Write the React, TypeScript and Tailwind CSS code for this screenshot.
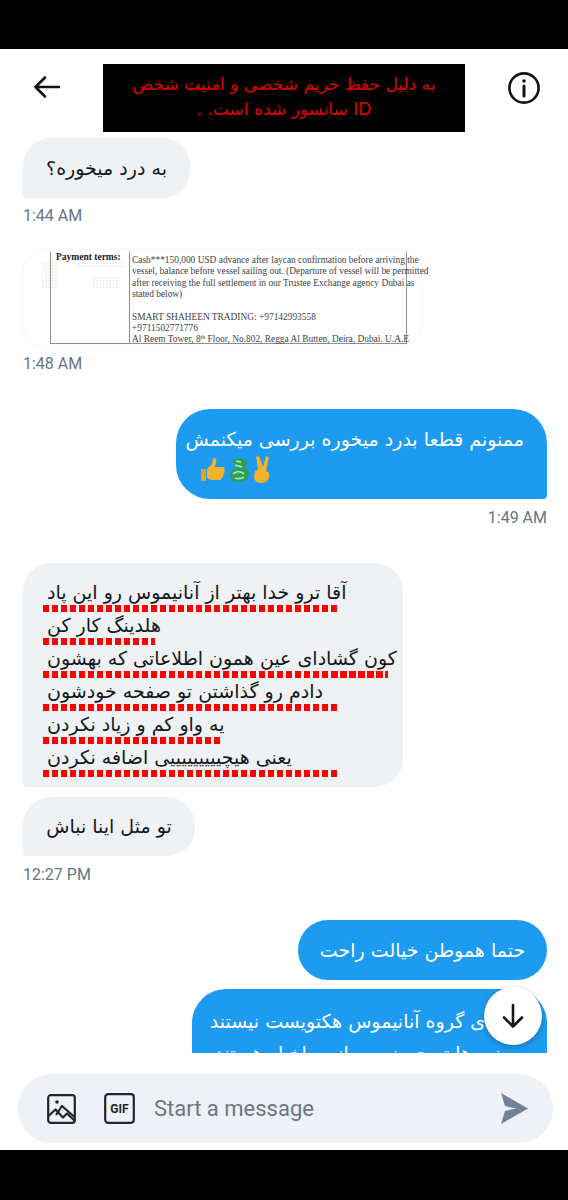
const persian = "font-['DejaVu_Sans',sans-serif]"
const dots = 'h-[7px] bg-[repeating-linear-gradient(90deg,#ff0000_0,#ff0000_6.5px,transparent_6.5px,transparent_9px)]'

const lines = [
  { text: 'آقا ترو خدا بهتر از آنانیموس رو این پاد', width: 'w-[294px]' },
  { text: 'هلدینگ کار کن', width: 'w-[112px]' },
  { text: 'کون گشادای عین همون اطلاعاتی که بهشون', width: 'w-[345px]' },
  { text: 'دادم رو گذاشتن تو صفحه خودشون', width: 'w-[294px]' },
  { text: 'یه واو کم و زیاد نکردن', width: 'w-[177px]' },
  { text: 'یعنی هیچیییییییییی اضافه نکردن', width: 'w-[294px]' },
]

const docLines = [
  'Cash***150,000 USD advance after laycan confirmation before arriving the',
  'vessel, balance before vessel sailing out. (Departure of vessel will be permitted',
  'after receiving the full settlement in our Trustee Exchange agency Dubai as',
  'stated below)',
]

function Time({ children, right }: { children: string; right?: boolean }) {
  return (
    <div className={`font-['Roboto',sans-serif] text-[16px] leading-[20px] text-[#66757f] ${right ? 'text-right' : ''}`}>
      {children}
    </div>
  )
}

function Thumb() {
  return (
    <svg width="26" height="26" viewBox="0 0 26 26">
      <path d="M1 12h5v12H1z" fill="#e9a320" />
      <path d="M7 12l5-5 1-6c3 0 4 2 3 5l-1 4h8c2 0 2 2 1 3 1 1 1 3-1 4 1 1 0 3-1 3 0 2-1 3-3 3H11l-4-2z" fill="#f5b22c" />
    </svg>
  )
}

function Dragon() {
  return (
    <svg width="24" height="28" viewBox="0 0 24 28" fill="none">
      <path d="M12 2c-5 0-7 3-6 6 1 2 4 2 5 4-4 0-8 3-8 8 0 4 4 6 8 6 6 0 11-3 11-8 0-3-2-5-5-6 2-1 4-3 3-6-1-3-4-4-8-4z" fill="#2f9e58" />
      <path d="M9 5l5 1M8 9l7 2M6 18c3-3 8-3 11 0M8 22c3 1 6 1 9-1" stroke="#b9e4b2" strokeWidth="1.6" />
    </svg>
  )
}

function Victory() {
  return (
    <svg width="22" height="28" viewBox="0 0 22 28">
      <path d="M4 1l3-1 4 11 3-11 3 1-3 14c3 1 4 3 3 6-1 4-4 6-8 6-4 0-7-3-7-6l1-6 3-1z" fill="#f5b22c" />
    </svg>
  )
}

function PaperDots() {
  const pts: [number, number][] = []
  for (let y = 0; y < 9; y++) {
    for (let x = 0; x < 26; x++) {
      const keep = x < 5 || (y > 4 && x > 15 && x < 24) || (y < 2 && x > 10)
      if (keep) pts.push([x * 3.2 + 1, y * 3 + 1])
    }
  }
  return (
    <svg className="absolute left-[19px] top-[12px]" width="86" height="30" viewBox="0 0 86 30">
      {pts.map(([cx, cy], i) => (
        <circle key={i} cx={cx} cy={cy} r="0.8" fill="#dfe1e3" />
      ))}
    </svg>
  )
}

export default function App() {
  return (
    <div className="flex h-[1200px] w-[568px] flex-col overflow-hidden bg-black">
      <div className="h-[49px] shrink-0" />

      <div className="relative flex h-[1101px] shrink-0 flex-col bg-white">
        {/* Header */}
        <header className="flex h-[83px] shrink-0 items-start justify-between pl-[33px] pr-[27px] pt-[15px]">
          <svg className="mt-[9px]" width="28" height="28" viewBox="0 0 28 28" fill="none" stroke="#0f1419" strokeWidth="2.6" strokeLinecap="round" strokeLinejoin="round">
            <path d="M3 14h23M12 4.5L2.5 14l9.5 9.5" />
          </svg>
          <div className={`flex h-[68px] w-[362px] flex-col items-center justify-center bg-black pb-[2px] text-center text-[17px] leading-[25px] text-[#e00000] ${persian}`} dir="rtl">
            <div>به دلیل حفظ حریم شخصی و امنیت شخص</div>
            <div>ID سانسور شده است. .</div>
          </div>
          <svg className="mt-[7px]" width="34" height="34" viewBox="0 0 34 34" fill="none" stroke="#0f1419" strokeWidth="2.6">
            <circle cx="17" cy="17" r="14.6" />
            <path d="M17 15v10" strokeLinecap="round" strokeWidth="3" />
            <circle cx="17" cy="10" r="1.8" fill="#0f1419" stroke="none" />
          </svg>
        </header>

        {/* Messages */}
        <main className="relative h-[930px] shrink-0 overflow-hidden pl-[23px] pr-[21px] pt-[6px]">
          <div className={`flex h-[60px] w-[167px] items-center justify-center rounded-[28px] rounded-bl-[4px] bg-[#eff2f4] text-[19px] text-[#14171a] ${persian}`} dir="rtl">
            به درد میخوره؟
          </div>
          <div className="mt-[8px]"><Time>1:44 AM</Time></div>

          <div className="relative mt-[24px] h-[97px] w-[398px] rounded-[24px] bg-white shadow-[0_0_3px_#eceef0]">
            <PaperDots />
            <div className="absolute bottom-[3px] left-[27px] top-[2px] flex w-[357px] border-b border-l border-r border-[#8a8f93] font-['Liberation_Serif',serif] text-[#3d4347]">
              <div className="w-[79px] shrink-0 border-r border-[#8a8f93] pl-[5px] text-[9.5px] font-bold leading-[11px] text-[#1d2226]">Payment terms:</div>
              <div className="pl-[2px] pr-[3px] pt-[3px] text-[9.4px] leading-[11.4px]">
                {docLines.map((l, i) => (
                  <div key={i} className="whitespace-nowrap">{l}</div>
                ))}
                <div className="mt-[11px] whitespace-nowrap">SMART SHAHEEN TRADING: +97142993558</div>
                <div className="whitespace-nowrap">+9711502771776</div>
                <div className="whitespace-nowrap">Al Reem Tower, 8<sup className="text-[6px]">th</sup> Floor, No.802, Regga Al Butten, Deira, Dubai. U.A.E</div>
              </div>
            </div>
          </div>
          <div className="mt-[7px]"><Time>1:48 AM</Time></div>

          <div className="ml-auto mt-[35px] h-[90px] w-[371px] rounded-[34px] rounded-br-[4px] bg-[#1d9bf0] pl-[24px] pr-[23px] pt-[16px]">
            <div className={`whitespace-nowrap text-right text-[19px] leading-[28px] text-white ${persian}`} dir="rtl">ممنونم قطعا بدرد میخوره بررسی میکنمش</div>
            <div className="mt-[3px] flex items-center gap-[1px]">
              <Thumb />
              <Dragon />
              <Victory />
            </div>
          </div>
          <div className="mt-[9px]"><Time right>1:49 AM</Time></div>

          <div className={`mt-[35px] h-[224px] w-[380px] rounded-[28px] rounded-bl-[4px] bg-[#eff2f4] pl-[20px] pt-[16px] text-[#14171a] ${persian}`}>
            {lines.map(l => (
              <div key={l.text} className="h-[33px]">
                <div className={`pl-[4px] text-[19px] leading-[26px] ${l.text.length ? '' : ''} whitespace-nowrap`}>
                  <span dir="rtl">{l.text}</span>
                </div>
                <div className={`${dots} ${l.width}`} />
              </div>
            ))}
          </div>

          <div className={`mt-[10px] flex h-[59px] w-[172px] items-center justify-center rounded-[28px] rounded-bl-[4px] bg-[#eff2f4] text-[19px] text-[#14171a] ${persian}`} dir="rtl">
            تو مثل اینا نباش
          </div>
          <div className="mt-[9px]"><Time>12:27 PM</Time></div>

          <div className={`ml-auto mt-[35px] flex h-[60px] w-[249px] items-center justify-center rounded-[30px] bg-[#1d9bf0] text-[19px] text-white ${persian}`} dir="rtl">
            حتما هموطن خیالت راحت
          </div>
          <div className="ml-auto mt-[9px] w-[355px] overflow-hidden rounded-t-[34px] bg-[#1d9bf0] pl-[24px] pr-[23px] pt-[16px]">
            <div className={`h-[48px] whitespace-nowrap text-right text-[19px] leading-[32px] text-white ${persian}`} dir="rtl">
              اعضای گروه آنانیموس هکتویست نیستند
              <br />
              بعضی ها تو حوضه رسانه و اخبار هستند
            </div>
          </div>

          <button className="absolute left-[484px] top-[855px] flex h-[58px] w-[58px] items-center justify-center rounded-full bg-white shadow-[0_2px_6px_rgba(0,0,0,0.25)]">
            <svg width="26" height="26" viewBox="0 0 26 26" fill="none" stroke="#0f1419" strokeWidth="2.6" strokeLinecap="round" strokeLinejoin="round">
              <path d="M13 2v21M4 14.5L13 23.5l9-9" />
            </svg>
          </button>
        </main>

        {/* Composer */}
        <div className="mx-[18px] mt-[12px] flex h-[69px] w-[535px] items-center rounded-[34px] bg-[#eef1f5] pl-[29px] pr-[25px]">
          <svg width="29" height="30" viewBox="0 0 29 30" fill="none" stroke="#1f262c" strokeWidth="2.2" strokeLinejoin="round">
            <rect x="1.2" y="1.2" width="26.6" height="27.6" rx="2.5" />
            <path d="M1.5 22l7-6.5 7.5 8 4-4 8 7.5" />
            <path d="M9 21l6-9 12.5 11" />
            <circle cx="10" cy="8" r="1.8" fill="#1f262c" stroke="none" />
          </svg>
          <svg className="ml-[28px]" width="31" height="31" viewBox="0 0 31 31" fill="none">
            <rect x="1.2" y="1.2" width="28.6" height="28.6" rx="3" stroke="#1f262c" strokeWidth="2.2" />
            <text x="15.5" y="20" textAnchor="middle" fontFamily="Roboto, sans-serif" fontWeight="700" fontSize="12" fill="#1f262c">GIF</text>
          </svg>
          <span className="ml-[19px] flex-1 font-['Roboto',sans-serif] text-[22px] text-[#6b7784]">Start a message</span>
          <svg width="28" height="31" viewBox="0 0 28 31">
            <path d="M1 0l27 15.5L1 31l4-13 11-2.5L5 13z" fill="#728294" />
          </svg>
        </div>
      </div>

      <div className="h-[50px] shrink-0" />
    </div>
  )
}
